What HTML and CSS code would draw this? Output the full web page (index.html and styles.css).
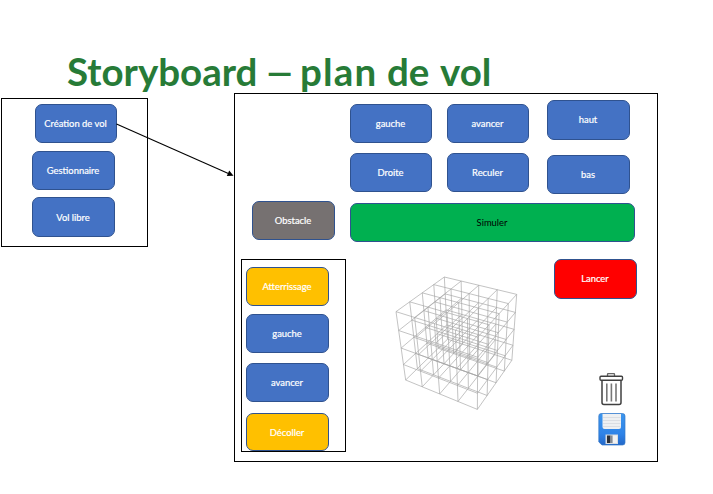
FILE: index.html
```html
<!DOCTYPE html>
<html lang="fr">
<head>
<meta charset="utf-8">
<title>Storyboard – plan de vol</title>
<link rel="stylesheet" href="styles.css">
</head>
<body>
<h1 class="title"><span>Storyboard</span><span class="dash">–</span><span class="plan">plan</span><span>de</span><span>vol</span></h1>
<main class="board">
  <nav class="menu">
    <button class="btn btn-create">Création de vol</button>
    <button class="btn">Gestionnaire</button>
    <button class="btn btn-free">Vol libre</button>
  </nav>
  <section class="editor">
    <div class="side">
      <button class="btn obstacle">Obstacle</button>
      <div class="program">
        <button class="btn step">Atterrissage</button>
        <button class="btn">gauche</button>
        <button class="btn">avancer</button>
        <button class="btn step last">Décoller</button>
      </div>
    </div>
    <div class="work">
      <div class="controls">
        <div class="pad">
          <button class="btn">gauche</button>
          <button class="btn">avancer</button>
          <button class="btn">Droite</button>
          <button class="btn">Reculer</button>
        </div>
        <div class="altitude">
          <button class="btn up">haut</button>
          <button class="btn">bas</button>
        </div>
      </div>
      <button class="btn simulate">Simuler</button>
      <div class="lower">
        <svg class="cube" id="cube" width="145" height="155" viewBox="0 0 435 465"></svg>
        <div class="actions">
          <button class="btn launch">Lancer</button>
          <svg class="trash" width="25" height="34" viewBox="0 0 25 34" fill="none" stroke="#404040">
            <path d="M8.5 3V1.500q0-1 1-1h5q1 0 1 1V3" stroke="#666" stroke-width="1.3"/>
            <rect x="1" y="3.3" width="22.5" height="4" rx="1" fill="#fff" stroke-width="1.4"/>
            <path d="M3 7.500V29.500q0 2 2 2h15q2 0 2-2V7.500" stroke-width="1.5"/>
            <path d="M7.800 10.500V28.500M12.400 10.500V28.500M17 10.500V28.500" stroke="#777" stroke-width="1.6"/>
          </svg>
          <svg class="save" width="28" height="33" viewBox="0 0 28 33">
            <defs><linearGradient id="blue" x2="0" y2="1"><stop stop-color="#3d95ec"/><stop offset=".65" stop-color="#2e83e8"/><stop offset="1" stop-color="#2468c8"/></linearGradient></defs>
            <path d="M3 .5H24.500q2.500 0 2.500 2.500V29.500q0 2.500-2.500 2.500H4L.8 29V3q0-2.500 2.200-2.500z" fill="url(#blue)" stroke="#3479c8" stroke-width=".7"/>
            <path d="M4.500 1H23V14q0 2-2 2H6.500q-2 0-2-2z" fill="#eef0f2"/>
            <path d="M5 4.500H22.500M5 7.500H22.500M5 10.500H22.500M5 13.500H22.500" stroke="#d6d9de" stroke-width=".8"/>
            <path d="M7.500 21.500H20V31H7.500z" fill="#d9dde1"/>
            <path d="M9 22.500h3.500V30H9z" fill="#2c3038"/>
            <path d="M12.500 22.500h2V30h-2z" fill="#858a92"/>
            <path d="M15 22.500h4V30h-4z" fill="#f2f2f2"/>
          </svg>
        </div>
      </div>
    </div>
  </section>
</main>
<svg class="link" width="120" height="56" viewBox="0 0 120 56">
  <path d="M1.500 2L114.500 52" stroke="#000" stroke-width="1.100"/>
  <path d="M118.500 53.800L111.800 54L114.200 48.500z"/>
</svg>
<script src="cube.js"></script>
</body>
</html>
```
FILE: styles.css
```css
* { box-sizing: border-box; }
body { margin: 0; width: 713px; height: 494px; overflow: hidden; background: #fff; position: relative; font-family: Lato, "Liberation Sans", sans-serif; }
.title { display: grid; grid-template-columns: 199px 34px 87px 53px 52px; margin: 0; padding: 48px 0 0 67px; height: 93px; font: 700 38.5px/46px Lato, sans-serif; color: #277b37; white-space: pre; }
.dash { transform: scaleX(1.4); transform-origin: left; margin-left: -2px; }
.plan { letter-spacing: 1.2px; }
.board { display: flex; align-items: flex-start; padding-left: 1px; }
.menu { width: 147px; height: 149px; margin-top: 5px; border: 1px solid #000; padding: 5px 0 0 30px; display: flex; flex-direction: column; align-items: flex-start; }
.btn { display: flex; align-items: center; justify-content: center; flex: none; width: 83px; height: 39px; margin: 0; padding: 1px 1px 0 0; border: 1px solid #2f528f; border-radius: 7px; background: #4472c4; color: #fff; font: 400 9.4px/12px Lato, sans-serif; -webkit-text-stroke: .2px; }
.btn-create { width: 82px; margin: 0 0 8px 3px; }
.btn-free { height: 40px; margin-top: 7px; }
.editor { display: flex; width: 424px; height: 369px; margin-left: 86px; border: 1px solid #000; }
.side { width: 111px; padding-top: 107px; }
.obstacle { margin-left: 17px; background: #767171; }
.program { display: flex; flex-direction: column; width: 105px; height: 193px; margin: 19px 0 0 6px; border: 1px solid #000; padding: 7px 0 0 4px; }
.program .btn { margin-bottom: 8px; }
.program .btn:nth-child(2) { margin-bottom: 10px; }
.program .btn:nth-child(3) { margin-bottom: 11px; }
.program .last { height: 38px; margin: 0; }
.btn.step { background: #ffc000; }
.work { width: 303px; padding: 6px 0 0 4px; }
.controls { display: flex; height: 103px; }
.pad { display: grid; grid-template-columns: 82px 82px; gap: 10px 15px; align-content: start; padding-top: 4px; }
.pad .btn { width: 82px; }
.altitude { margin-left: 18px; }
.up { height: 40px; margin-bottom: 15px; padding-top: 0; }
.simulate { width: 285px; background: #00b050; color: #000; -webkit-text-stroke: 0; }
.lower { display: flex; }
.cube { flex: none; margin: 23px 0 0 35px; }
.actions { margin: 17px 0 0 24px; }
.launch { height: 40px; padding-top: 0; background: #f00; }
.trash, .save { display: block; }
.trash { margin: 74px 0 0 45px; }
.save { margin: 6px 0 0 44px; }
.link { position: absolute; left: 115px; top: 122px; }
```
FILE: cube.js
```js
// Perspective projection of a 4x4x4 lattice; u, v, w run from 0 to 1.
function project(u, v, w) {
  const s = 1 - 0.094 * u - 0.16 * v + 0.118 * w;
  return [(178 + 180 * u - 150.3 * v + 31.7 * w) / s, (36 + 43.8 * u + 81.6 * v + 212.9 * w) / s];
}
let d = "";
function line(a, b) {
  d += "M" + project(...a).map(n => n.toFixed(1)) + "L" + project(...b).map(n => n.toFixed(1));
}
for (let i = 0; i <= 4; i++) {
  for (let j = 0; j <= 4; j++) {
    const a = i / 4, b = j / 4;
    line([0, a, b], [1, a, b]);
    line([a, 0, b], [a, 1, b]);
    line([a, b, 0], [a, b, 1]);
  }
}
const path = document.createElementNS("http://www.w3.org/2000/svg", "path");
path.setAttribute("d", d);
path.setAttribute("fill", "none");
path.setAttribute("stroke", "#a4a4a4");
path.setAttribute("stroke-width", "2");
document.getElementById("cube").appendChild(path);
```
